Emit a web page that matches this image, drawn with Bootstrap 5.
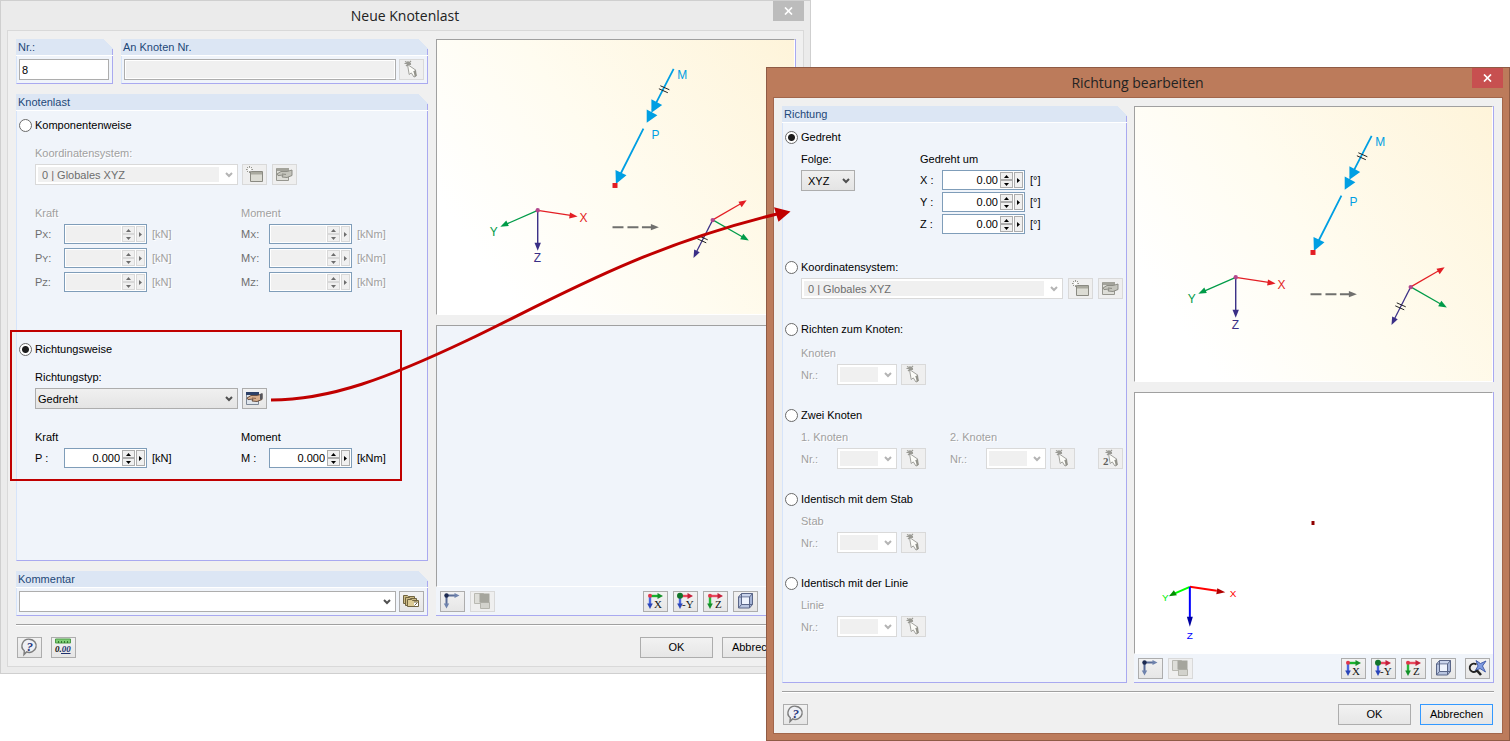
<!DOCTYPE html>
<html lang="de">
<head>
<meta charset="utf-8">
<meta name="viewport" content="width=device-width, initial-scale=1">
<title>Neue Knotenlast</title>
<link href="https://cdn.jsdelivr.net/npm/bootstrap@5.3.0/dist/css/bootstrap.min.css" rel="stylesheet">
<style>
:root{--face:#f0f0f0;--pane:#f0f4fa;--head:#dce6f4;--edge:#a9a9f0;--ctl:#adadad;--off:#d9d9d9;--mark:#c00000}
body{font-family:"Liberation Sans",Arial,sans-serif;font-size:11px;line-height:16px;color:#000;background:#fff}
/* the two dialogs overlap in the middle column */
.desk{display:grid;grid-template-columns:minmax(0,766fr) minmax(0,45fr) minmax(0,699fr);grid-template-rows:67px auto;align-items:start}
.dlg{--gap:8px;--cols:412fr 360fr;background:#ebebeb;border:1px solid #cfcfcf;padding:0 6px 6px;min-width:0}
.dlg-main{grid-column:1/3;grid-row:1/3}
.dlg-edit{--gap:7px;--cols:345fr 360fr;grid-column:2/4;grid-row:2/3;background:#bc7b5b;border-color:#8f5b45;z-index:1}
.bar{height:29px}
.bar h1{font:400 14px/30px "Open Sans","Noto Sans",sans-serif;color:#222;margin:0;padding-left:30px}
.shut{width:31px;height:20px;border:0;border-radius:0;padding:0;background:#bcbcbc;line-height:0}
.dlg-edit .shut{background:#c75050}
.client{background:var(--face);border:1px solid var(--off);padding:8px 7px 8px 8px}
.dlg-edit .client{border-color:#a2664b;padding:8px}
.split{display:grid;grid-template-columns:var(--cols);column-gap:var(--gap)}
.split>*{min-width:0}
.g10{gap:10px}
.g9{gap:9px;padding:0 1px}
.g8{gap:8px}
.g5{gap:5px}
.g4{gap:4px}
.g3{gap:3px}
.g2{gap:2px}
.pane-head{font-size:11px;line-height:16px;height:17px;margin:0;padding-left:2px;color:#1e4878;border-bottom:1px solid #fff;
 background:linear-gradient(var(--edge),var(--edge)) right bottom/1px 6px no-repeat,linear-gradient(225deg,transparent 7px,var(--head) 7px)}
.pane-body{background:var(--pane);border:solid var(--edge);border-width:0 1px 1px 0;border-left:1px solid #d6e4fa;padding:3px 3px 3px 2px}
.pane-form{padding-top:6px}
.nr{flex:0 0 97px}
.ind{margin-left:16px}
.box,.drop{height:21px;min-height:0;border:1px solid var(--ctl);border-radius:0;padding:0 2px;font-size:11px;line-height:16px;color:#000;background-color:#fff;box-shadow:none}
.box:disabled{background:var(--face);border-color:var(--ctl);box-shadow:inset 0 0 0 1px #fff}
.drop{--chev:url("data:image/svg+xml,%3Csvg xmlns='http://www.w3.org/2000/svg' width='8' height='6'%3E%3Cpath d='M1 1l3 3 3-3' fill='none' stroke='%23505050' stroke-width='2'/%3E%3C/svg%3E");
 appearance:none;background:var(--chev) right 4px center/8px 6px no-repeat,#fff}
.drop.raised{background:var(--chev) right 4px center/8px 6px no-repeat,linear-gradient(#f0f0f0,#e4e4e4)}
.drop:disabled{--chev:url("data:image/svg+xml,%3Csvg xmlns='http://www.w3.org/2000/svg' width='8' height='6'%3E%3Cpath d='M1 1l3 3 3-3' fill='none' stroke='%23b4b4b4' stroke-width='2'/%3E%3C/svg%3E");
 color:#6d6d6d;opacity:1;border-color:var(--off);padding-left:6px;
 background:var(--chev) right 4px center/8px 6px no-repeat,linear-gradient(var(--face),var(--face)) 2px 2px/calc(100% - 20px) calc(100% - 4px) no-repeat,#fff}
.w-type{flex:0 0 203px;width:203px}
.w-no{flex:0 0 60px;width:60px}
.w-seq{width:54px}
.w-seq.drop{padding-left:6px}
.tool{width:25px;height:21px;flex:none;padding:0;border:1px solid var(--ctl);border-radius:0;line-height:0;background:linear-gradient(#f2f2f2,#e6e6e6)}
.tool svg{width:23px;height:19px;display:block}
.tool:disabled{border-color:var(--off);background:#efefef;opacity:1}
.push{width:73px;height:21px;padding:0;border:1px solid var(--ctl);border-radius:0;font-size:11px;line-height:19px;background:linear-gradient(#f2f2f2,#e6e6e6);color:#000}
.push.preset{border-color:#3399ff}
.pick{display:flex;align-items:center;height:16px;gap:3px}
.pick input{appearance:none;width:13px;height:13px;margin:0;border:1px solid #6a6a6a;border-radius:50%;background:#fff;flex:none}
.pick input:checked{background:radial-gradient(circle,#1d1d1d 3px,#fff 4px)}
.dim{color:#a0a0a0;text-shadow:1px 1px #fff}
.half{color:#6d6d6d}
.half span{font-size:9px}
.unit{padding-left:5px}
.spin{display:flex;width:83px;height:20px;border:1px solid #7f9db9;background:#fff;padding:1px;gap:1px;flex:none}
.spin input{flex:1;min-width:0;border:0;padding:0 1px 0 0;text-align:right;background:#fff;color:#000;line-height:16px}
.spin input:disabled{background:var(--face)}
.spin div{display:flex;flex-direction:column;width:13px}
.spin button{border:1px solid var(--ctl);border-radius:0;background:#f0f0f0;padding:0;flex:1;display:flex;align-items:center;justify-content:center;min-height:0}
.spin>button{flex:0 0 9px}
.spin button:disabled{border-color:var(--off)}
.spin svg{fill:#000;display:block}
.spin button:disabled svg{fill:#6d6d6d}
.col-a{flex:0 0 206px}
.k1{width:29px}.k2{width:28px}.k3{width:22px}.k4{width:36px}
.col-seq{flex:0 0 119px}
.col-node{flex:0 0 149px}
.framed{border:2px solid var(--mark);margin:38px 22px 0 -9px;padding:9px 0 11px 7px}
.mt-label{margin-top:12px}
.mt-row{margin-top:6px}
.mt-ctl{margin-top:3px}
.mt-pair{margin-top:20px}
.sect{margin-top:22px}
.sect-top{margin-top:25px}
.sink{border:1px solid #fff;border-top-color:#a0a0a0;border-left-color:#a0a0a0}
.stack{border-right:1px solid var(--edge)}
.pic{background:linear-gradient(55deg,#fff 15%,#fffcf0 50%,#fef4da)}
.pic svg,.view svg{display:block;width:100%;height:274px}
.view{background:var(--pane)}
.view svg{height:260px}
.dlg-edit .view{background:#fff}
.strip{background:var(--pane);border:solid var(--edge);border-width:0 1px 1px 0;padding:4px 3px 3px 4px;gap:5px}
.rule{height:2px;background:#a0a0a0;border-bottom:1px solid #fff;margin:8px 0 11px}
.flow{position:absolute;left:0;top:0;width:100%;height:741px;pointer-events:none;z-index:2}
.defs{position:absolute;width:0;height:0}
</style>
<script src="https://cdn.jsdelivr.net/npm/bootstrap@5.3.0/dist/js/bootstrap.bundle.min.js"></script>
</head>
<body>
<svg class="defs" aria-hidden="true">
<defs>
<symbol id="i-up" viewBox="0 0 5 3"><path d="M0 3L2.500 0 5 3z"/></symbol>
<symbol id="i-dn" viewBox="0 0 5 3"><path d="M0 0L2.500 3 5 0z"/></symbol>
<symbol id="i-rt" viewBox="0 0 3 5"><path d="M0 0L3 2.500 0 5z"/></symbol>
<symbol id="i-pick" viewBox="0 0 23 19"><path d="M5 1.500l6 3M6 6l5-5M4.500 3.500h6.500M8 1v5" stroke="#9a9a94" stroke-width="1.200" fill="none"/><path d="M7.500 4.500l8.500 5.800-2.300 1.200 2.600 4-2.300 1.600-2.700-4.200-2.100 1.600z" fill="#fcfcf8" stroke="#8c8c86" stroke-width=".8"/><path d="M13.700 11.500l2.300-1.200.8 5.500-2 1.500z" fill="#92928a"/></symbol>
<symbol id="i-pick2" viewBox="0 0 23 19"><use href="#i-pick" x="2" width="23" height="19"/><text x="4" y="16" font-family="Liberation Serif,serif" font-weight="700" font-size="11" fill="#60605c">2</text></symbol>
<symbol id="i-new" viewBox="0 0 23 19"><path d="M7.500 6.500h12v10h-12z" fill="#dcdcd4" stroke="#8a8a82"/><path d="M8 7h11v2.500H8z" fill="#a9a99f"/><path d="M6.500 1v7M3 4.500h7M4 2l5 5M9 2L4 7" stroke="#96968f" fill="none"/><circle cx="6.500" cy="4.500" r="1.800" fill="#fff"/></symbol>
<symbol id="i-edit0" viewBox="0 0 23 19"><path d="M3.500 3.500h12v12h-12z" fill="#deded8" stroke="#96968f"/><path d="M4 3h12v3H4z" fill="#a3a39b"/><path d="M4 9l4-2.500h6l5-1.500v5.500l-5 2-5-.5 1-2-5 .6z" fill="#c4c4bc" stroke="#85857d" stroke-width=".9"/><path d="M9 9l4 .4" stroke="#8a8a82"/></symbol>
<symbol id="i-edit" viewBox="0 0 23 19"><path d="M3.500 3.500h12v12h-12z" fill="#dfe5ec" stroke="#7c8796"/><path d="M3 3h13v3H3z" fill="#2e4167"/><path d="M4 9l4-2.500h6l5-1.500v5.500l-5 2-5-.5 1-2-5 .6z" fill="#d8ae8c" stroke="#5c4334" stroke-width=".9"/><path d="M9 9l4 .4" stroke="#8a6248"/><path d="M17 5l2.500-1v5.500l-2.500 1.500z" fill="#55555b"/></symbol>
<symbol id="i-stack" viewBox="0 0 23 19"><g fill="#cdbb84" stroke="#6f6340"><path d="M3.500 3.500h4l1 1h6v7h-11z"/><path d="M5.500 5.500h4l1 1h6v7h-11z"/><path d="M7.500 7.500h4l1 1h6v6h-11z" fill="#dccb95"/></g><path d="M14 10h4v4h-4z" fill="#fff"/><path d="M14.500 13.500l3-3M14 10h3.500" stroke="#6f6340"/></symbol>
<symbol id="i-help" viewBox="0 0 23 19"><path d="M11.500 1.200a7 6.600 0 1 1-3 12.700L6 16.500l.3-3.800A7 6.600 0 0 1 11.500 1.200z" fill="#eef0f5" stroke="#7d7d7d" stroke-width="1.400"/><text x="8.500" y="12.500" font-family="Liberation Serif,serif" font-size="13" font-weight="700" font-style="italic" fill="#26367c">?</text></symbol>
<symbol id="i-unit" viewBox="0 0 23 19"><path d="M3.500 1h15v4h-15z" fill="#7fce75" stroke="#4e9c48"/><path d="M6.500 5V3M9.500 5V3M12.500 5V3M15.500 5V3" stroke="#32762f"/><text x="3" y="14" font-family="Liberation Serif,serif" font-size="9" font-weight="700" font-style="italic" fill="#111">0.<tspan fill="#20306e">00</tspan></text><path d="M9 15.500h9.500" stroke="#20306e"/></symbol>
<symbol id="i-axes" viewBox="0 0 23 19"><path d="M5.500 3.500V13M5.500 3.500H15" stroke="#5a6d98" stroke-width="2" fill="none"/><path d="M2.800 11.500L5.500 16.500 8.200 11.500zM13.500 1l5 2.500-5 2.500z" fill="#6f83ad"/><circle cx="5.500" cy="3.500" r="2.200" fill="#1c2a50"/></symbol>
<symbol id="i-layers" viewBox="0 0 23 19"><path d="M3.500 1.500h9v10h-9z" fill="#deded9" stroke="#b9b9b2"/><path d="M9.500 10.500h9v6h-9z" fill="#d2d2cc" stroke="#b4b4ac"/><path d="M8.500 1.500h10v9h-10z" fill="#a5a59d"/></symbol>
<symbol id="i-vx" viewBox="0 0 23 19"><path d="M6 4h9" stroke="#19b22d" stroke-width="2.400"/><path d="M13.500 1l5.500 3-5.500 3z" fill="#15902a"/><path d="M6 4v9" stroke="#4a66e0" stroke-width="2.400"/><path d="M3.200 11.500L6 17l2.800-5.500z" fill="#2a45b8"/><circle cx="6" cy="3.800" r="2" fill="#e2354a"/><text x="10" y="16" font-family="Liberation Serif,serif" font-size="11" fill="#111">X</text></symbol>
<symbol id="i-vy" viewBox="0 0 23 19"><path d="M6 4h9" stroke="#e8495e" stroke-width="2.400"/><path d="M13.500 1l5.500 3-5.500 3z" fill="#c4203a"/><path d="M6 4v9" stroke="#4a66e0" stroke-width="2.400"/><path d="M3.200 11.500L6 17l2.800-5.500z" fill="#2a45b8"/><circle cx="6" cy="3.800" r="3" fill="#11752a"/><text x="8" y="16" font-family="Liberation Serif,serif" font-size="11" fill="#111">-Y</text></symbol>
<symbol id="i-vz" viewBox="0 0 23 19"><path d="M6 4h9" stroke="#e8495e" stroke-width="2.400"/><path d="M13.500 1l5.500 3-5.500 3z" fill="#c4203a"/><path d="M6 4v9" stroke="#26b83a" stroke-width="2.400"/><path d="M3.200 11.500L6 17l2.800-5.500z" fill="#13902a"/><circle cx="6" cy="3.800" r="2" fill="#e2354a"/><text x="11" y="16" font-family="Liberation Serif,serif" font-size="11" fill="#111">Z</text></symbol>
<symbol id="i-cube" viewBox="0 0 23 19"><path d="M7.500 1.500h11l-3 3.500h-11z" fill="#c9d4ec"/><path d="M18.500 1.500v11l-3 3.500V5z" fill="#a4b3d6"/><path d="M4.500 5h11v11h-11z" fill="#b9c5e0"/><path d="M4.500 5l3-3.500h11v11l-3 3.500h-11zM4.500 5h11v11M15.500 5l3-3.500M7.500 1.500v11h11M7.500 12.500L4.500 16" fill="none" stroke="#5a6688"/><path d="M8 5.500h7V12H8z" fill="#eef3fd"/></symbol>
<symbol id="i-zoom" viewBox="0 0 23 19"><path d="M10 1.500l4.500 3L20 2l-3.500 5 3 6-5.500-3.500-5 2.500 3-5z" fill="#7f9be0" stroke="#3a55a4" stroke-width=".9"/><path d="M10.500 5.500A4.200 4.200 0 1 0 11.500 11" fill="none" stroke="#222" stroke-width="1.800"/><path d="M11 11.500l4 4.500" stroke="#222" stroke-width="2.600"/></symbol>
<symbol id="i-x" viewBox="0 0 9 8"><path d="M1 .5l7 7M8 .5l-7 7" stroke="#fff" stroke-width="1.700"/></symbol>
<symbol id="scheme" viewBox="0 0 358 274">
 <g font-family="Liberation Sans,Arial,sans-serif" font-size="12">
 <path d="M237.300 28.500L216 70M207 88.500L184 134" stroke="#009fe3" stroke-width="1.800"/>
 <path d="M215 59l10.800 5.800L215 72.500zM210.300 69.300L221 75l-10.700 7.600zM179 130l11 5.200-10.600 8.800z" fill="#009fe3"/>
 <path d="M224 45.500l9 4M222.500 48.500l9 4" stroke="#222"/>
 <path d="M176 143h5v5h-5z" fill="#e31e24"/>
 <text x="241" y="39" fill="#009fe3">M</text><text x="215" y="99" fill="#009fe3">P</text>
 <path d="M101 170.500l33 5" stroke="#e31e24" stroke-width="1.200"/><path d="M141 176.700l-8.500 2 .9-6.200z" fill="#e31e24"/>
 <path d="M101 170.500L70 184" stroke="#009b48" stroke-width="1.200"/><path d="M63.500 186.800l6-6.300 2.500 5.600z" fill="#009b48"/>
 <path d="M101 170.500V204" stroke="#3a2f86" stroke-width="1.400"/><path d="M101 211l-3.200-8h6.400z" fill="#3a2f86"/>
 <circle cx="101" cy="170.300" r="2.200" fill="#b2478d"/>
 <text x="143" y="182" fill="#e31e24">X</text><text x="53" y="196" fill="#009b48">Y</text><text x="97" y="222" fill="#3a2f86">Z</text>
 <path d="M176 187.300h11M191 187.300h11M205.500 187.300h10" stroke="#70706e" stroke-width="2"/><path d="M222.500 187.300l-8-3.200v6.400z" fill="#70706e"/>
 <path d="M276.500 180l28-16.200" stroke="#e31e24" stroke-width="1.200"/><path d="M310.500 160.300l-5 7-3.200-5.500z" fill="#e31e24"/>
 <path d="M276.500 180l30 17.200" stroke="#009b48" stroke-width="1.200"/><path d="M312.700 200.800l-8.700-1.300 3.200-5.600z" fill="#009b48"/>
 <path d="M276.500 180L260 212.500" stroke="#3a2f86" stroke-width="1.200"/><path d="M257.200 218.300l.7-8.700 5.600 2.900z" fill="#3a2f86"/>
 <path d="M262.500 196l9 4M261 199l9 4" stroke="#222"/>
 <circle cx="276.500" cy="180.200" r="2.200" fill="#b2478d"/>
 </g>
</symbol>
</defs>
</svg>

<main class="desk position-relative">
<section class="dlg dlg-main" aria-label="Neue Knotenlast">
 <div class="bar d-flex align-items-start">
  <h1 class="flex-grow-1 text-center">Neue Knotenlast</h1>
  <button type="button" class="btn shut" aria-label="Schließen"><svg width="9" height="8"><use href="#i-x"/></svg></button>
 </div>
 <form class="client">
  <div class="split">
   <div class="d-flex flex-column g10">
    <div class="d-flex g8">
     <section class="nr">
      <h2 class="pane-head"><label for="nr">Nr.:</label></h2>
      <div class="pane-body"><input id="nr" class="form-control box" value="8"></div>
     </section>
     <section class="flex-grow-1">
      <h2 class="pane-head"><label for="anr">An Knoten Nr.</label></h2>
      <div class="pane-body d-flex g3"><input id="anr" class="form-control box" disabled><button type="button" class="btn tool" disabled aria-label="Knoten wählen"><svg><use href="#i-pick"/></svg></button></div>
     </section>
    </div>
    <section class="flex-grow-1 d-flex flex-column">
     <h2 class="pane-head">Knotenlast</h2>
     <div class="pane-body pane-form flex-grow-1">
      <label class="pick"><input type="radio" name="mode">Komponentenweise</label>
      <div class="ind">
       <label for="ks1" class="dim d-block mt-label">Koordinatensystem:</label>
       <div class="d-flex g4 mt-ctl"><select id="ks1" class="form-select drop w-type" disabled><option>0 | Globales XYZ</option></select>
        <div class="d-flex g5"><button type="button" class="btn tool" disabled aria-label="Neu"><svg><use href="#i-new"/></svg></button><button type="button" class="btn tool" disabled aria-label="Bearbeiten"><svg><use href="#i-edit0"/></svg></button></div></div>
       <div class="d-flex mt-pair">
        <div class="col-a">
         <div class="dim">Kraft</div>
         <div class="d-flex flex-column g4 mt-ctl">
         <div class="d-flex align-items-center"><label for="px" class="k1 half">P<span>X</span>:</label><div class="spin"><input id="px" disabled><div><button type="button" disabled aria-label="mehr"><svg width="5" height="3"><use href="#i-up"/></svg></button><button type="button" disabled aria-label="weniger"><svg width="5" height="3"><use href="#i-dn"/></svg></button></div><button type="button" disabled aria-label="Liste"><svg width="3" height="5"><use href="#i-rt"/></svg></button></div><span class="dim unit">[kN]</span></div>
         <div class="d-flex align-items-center"><label for="py" class="k1 half">P<span>Y</span>:</label><div class="spin"><input id="py" disabled><div><button type="button" disabled aria-label="mehr"><svg width="5" height="3"><use href="#i-up"/></svg></button><button type="button" disabled aria-label="weniger"><svg width="5" height="3"><use href="#i-dn"/></svg></button></div><button type="button" disabled aria-label="Liste"><svg width="3" height="5"><use href="#i-rt"/></svg></button></div><span class="dim unit">[kN]</span></div>
         <div class="d-flex align-items-center"><label for="pz" class="k1 half">P<span>Z</span>:</label><div class="spin"><input id="pz" disabled><div><button type="button" disabled aria-label="mehr"><svg width="5" height="3"><use href="#i-up"/></svg></button><button type="button" disabled aria-label="weniger"><svg width="5" height="3"><use href="#i-dn"/></svg></button></div><button type="button" disabled aria-label="Liste"><svg width="3" height="5"><use href="#i-rt"/></svg></button></div><span class="dim unit">[kN]</span></div>
         </div>
        </div>
        <div>
         <div class="dim">Moment</div>
         <div class="d-flex flex-column g4 mt-ctl">
         <div class="d-flex align-items-center"><label for="mx" class="k2 half">M<span>X</span>:</label><div class="spin"><input id="mx" disabled><div><button type="button" disabled aria-label="mehr"><svg width="5" height="3"><use href="#i-up"/></svg></button><button type="button" disabled aria-label="weniger"><svg width="5" height="3"><use href="#i-dn"/></svg></button></div><button type="button" disabled aria-label="Liste"><svg width="3" height="5"><use href="#i-rt"/></svg></button></div><span class="dim unit">[kNm]</span></div>
         <div class="d-flex align-items-center"><label for="my" class="k2 half">M<span>Y</span>:</label><div class="spin"><input id="my" disabled><div><button type="button" disabled aria-label="mehr"><svg width="5" height="3"><use href="#i-up"/></svg></button><button type="button" disabled aria-label="weniger"><svg width="5" height="3"><use href="#i-dn"/></svg></button></div><button type="button" disabled aria-label="Liste"><svg width="3" height="5"><use href="#i-rt"/></svg></button></div><span class="dim unit">[kNm]</span></div>
         <div class="d-flex align-items-center"><label for="mz" class="k2 half">M<span>Z</span>:</label><div class="spin"><input id="mz" disabled><div><button type="button" disabled aria-label="mehr"><svg width="5" height="3"><use href="#i-up"/></svg></button><button type="button" disabled aria-label="weniger"><svg width="5" height="3"><use href="#i-dn"/></svg></button></div><button type="button" disabled aria-label="Liste"><svg width="3" height="5"><use href="#i-rt"/></svg></button></div><span class="dim unit">[kNm]</span></div>
         </div>
        </div>
       </div>
      </div>
      <div class="framed">
       <label class="pick"><input type="radio" name="mode" checked>Richtungsweise</label>
       <div class="ind">
        <label for="rt" class="d-block mt-label">Richtungstyp:</label>
        <div class="d-flex g4 mt-ctl"><select id="rt" class="form-select drop raised w-type"><option>Gedreht</option></select><button type="button" class="btn tool" aria-label="Richtung bearbeiten"><svg><use href="#i-edit"/></svg></button></div>
        <div class="d-flex mt-pair">
         <div class="col-a">
          <div>Kraft</div>
          <div class="d-flex align-items-center mt-ctl"><label for="p" class="k1">P :</label><div class="spin"><input id="p" value="0.000"><div><button type="button" aria-label="mehr"><svg width="5" height="3"><use href="#i-up"/></svg></button><button type="button" aria-label="weniger"><svg width="5" height="3"><use href="#i-dn"/></svg></button></div><button type="button" aria-label="Liste"><svg width="3" height="5"><use href="#i-rt"/></svg></button></div><span class="unit">[kN]</span></div>
         </div>
         <div>
          <div>Moment</div>
          <div class="d-flex align-items-center mt-ctl"><label for="m" class="k2">M :</label><div class="spin"><input id="m" value="0.000"><div><button type="button" aria-label="mehr"><svg width="5" height="3"><use href="#i-up"/></svg></button><button type="button" aria-label="weniger"><svg width="5" height="3"><use href="#i-dn"/></svg></button></div><button type="button" aria-label="Liste"><svg width="3" height="5"><use href="#i-rt"/></svg></button></div><span class="unit">[kNm]</span></div>
         </div>
        </div>
       </div>
      </div>
     </div>
    </section>
    <section>
     <h2 class="pane-head"><label for="kom">Kommentar</label></h2>
     <div class="pane-body d-flex g3"><select id="kom" class="form-select drop"><option></option></select><button type="button" class="btn tool" aria-label="Kommentare"><svg><use href="#i-stack"/></svg></button></div>
    </section>
   </div>
   <div class="d-flex flex-column g10">
    <div class="stack"><div class="sink pic"><svg role="img" aria-label="Lastschema"><use href="#scheme"/></svg></div></div>
    <div>
     <div class="stack"><div class="sink view"><svg aria-hidden="true"></svg></div></div>
     <div class="strip d-flex">
      <button type="button" class="btn tool" aria-label="Achsen"><svg><use href="#i-axes"/></svg></button><button type="button" class="btn tool" disabled aria-label="Ebenen"><svg><use href="#i-layers"/></svg></button>
      <button type="button" class="btn tool ms-auto" aria-label="Ansicht X"><svg><use href="#i-vx"/></svg></button><button type="button" class="btn tool" aria-label="Ansicht -Y"><svg><use href="#i-vy"/></svg></button><button type="button" class="btn tool" aria-label="Ansicht Z"><svg><use href="#i-vz"/></svg></button><button type="button" class="btn tool" aria-label="Isometrie"><svg><use href="#i-cube"/></svg></button><button type="button" class="btn tool ms-1" aria-label="Zoom"><svg><use href="#i-zoom"/></svg></button>
     </div>
    </div>
   </div>
  </div>
  <div class="rule"></div>
  <div class="d-flex g9">
   <button type="button" class="btn tool" aria-label="Hilfe"><svg><use href="#i-help"/></svg></button><button type="button" class="btn tool" aria-label="Einheiten"><svg><use href="#i-unit"/></svg></button>
   <button type="button" class="btn push ms-auto">OK</button><button type="button" class="btn push">Abbrechen</button>
  </div>
 </form>
</section>

<section class="dlg dlg-edit" aria-label="Richtung bearbeiten">
 <div class="bar d-flex align-items-start">
  <h1 class="flex-grow-1 text-center">Richtung bearbeiten</h1>
  <button type="button" class="btn shut" aria-label="Schließen"><svg width="9" height="8"><use href="#i-x"/></svg></button>
 </div>
 <form class="client">
  <div class="split">
   <section class="d-flex flex-column">
    <h2 class="pane-head">Richtung</h2>
    <div class="pane-body pane-form flex-grow-1">
     <label class="pick"><input type="radio" name="dir" checked>Gedreht</label>
     <div class="ind d-flex mt-row">
      <div class="col-seq"><label for="seq" class="d-block">Folge:</label><select id="seq" class="form-select drop raised w-seq mt-ctl"><option>XYZ</option></select></div>
      <div>
       <div>Gedreht um</div>
       <div class="d-flex flex-column g2 mt-ctl">
        <div class="d-flex align-items-center"><label for="rx" class="k3">X :</label><div class="spin"><input id="rx" value="0.00"><div><button type="button" aria-label="mehr"><svg width="5" height="3"><use href="#i-up"/></svg></button><button type="button" aria-label="weniger"><svg width="5" height="3"><use href="#i-dn"/></svg></button></div><button type="button" aria-label="Liste"><svg width="3" height="5"><use href="#i-rt"/></svg></button></div><span class="unit">[°]</span></div>
        <div class="d-flex align-items-center"><label for="ry" class="k3">Y :</label><div class="spin"><input id="ry" value="0.00"><div><button type="button" aria-label="mehr"><svg width="5" height="3"><use href="#i-up"/></svg></button><button type="button" aria-label="weniger"><svg width="5" height="3"><use href="#i-dn"/></svg></button></div><button type="button" aria-label="Liste"><svg width="3" height="5"><use href="#i-rt"/></svg></button></div><span class="unit">[°]</span></div>
        <div class="d-flex align-items-center"><label for="rz" class="k3">Z :</label><div class="spin"><input id="rz" value="0.00"><div><button type="button" aria-label="mehr"><svg width="5" height="3"><use href="#i-up"/></svg></button><button type="button" aria-label="weniger"><svg width="5" height="3"><use href="#i-dn"/></svg></button></div><button type="button" aria-label="Liste"><svg width="3" height="5"><use href="#i-rt"/></svg></button></div><span class="unit">[°]</span></div>
       </div>
      </div>
     </div>
     <div class="sect-top">
      <label class="pick"><input type="radio" name="dir">Koordinatensystem:</label>
      <div class="ind d-flex g5 mt-ctl"><select class="form-select drop" disabled aria-label="Koordinatensystem"><option>0 | Globales XYZ</option></select><button type="button" class="btn tool" disabled aria-label="Neu"><svg><use href="#i-new"/></svg></button><button type="button" class="btn tool" disabled aria-label="Bearbeiten"><svg><use href="#i-edit0"/></svg></button></div>
     </div>
     <div class="sect">
      <label class="pick"><input type="radio" name="dir">Richten zum Knoten:</label>
      <div class="ind dim mt-2">Knoten</div>
      <div class="ind d-flex align-items-center mt-ctl"><label for="n0" class="k4 dim">Nr.:</label><select id="n0" class="form-select drop w-no" disabled><option></option></select><button type="button" class="btn tool ms-1" disabled aria-label="Knoten wählen"><svg><use href="#i-pick"/></svg></button></div>
     </div>
     <div class="sect">
      <label class="pick"><input type="radio" name="dir">Zwei Knoten</label>
      <div class="ind dim d-flex mt-row"><span class="col-node">1. Knoten</span><span>2. Knoten</span></div>
      <div class="ind d-flex mt-ctl">
       <div class="col-node d-flex align-items-center"><label for="n1" class="k4 dim">Nr.:</label><select id="n1" class="form-select drop w-no" disabled><option></option></select><button type="button" class="btn tool ms-1" disabled aria-label="Knoten wählen"><svg><use href="#i-pick"/></svg></button></div>
       <div class="d-flex align-items-center"><label for="n2" class="k4 dim">Nr.:</label><select id="n2" class="form-select drop w-no" disabled><option></option></select><button type="button" class="btn tool ms-1" disabled aria-label="Knoten wählen"><svg><use href="#i-pick"/></svg></button></div>
       <button type="button" class="btn tool ms-auto" disabled aria-label="Zwei Knoten wählen"><svg><use href="#i-pick2"/></svg></button>
      </div>
     </div>
     <div class="sect">
      <label class="pick"><input type="radio" name="dir">Identisch mit dem Stab</label>
      <div class="ind dim mt-row">Stab</div>
      <div class="ind d-flex align-items-center mt-ctl"><label for="st" class="k4 dim">Nr.:</label><select id="st" class="form-select drop w-no" disabled><option></option></select><button type="button" class="btn tool ms-1" disabled aria-label="Stab wählen"><svg><use href="#i-pick"/></svg></button></div>
     </div>
     <div class="sect">
      <label class="pick"><input type="radio" name="dir">Identisch mit der Linie</label>
      <div class="ind dim mt-row">Linie</div>
      <div class="ind d-flex align-items-center mt-ctl"><label for="li" class="k4 dim">Nr.:</label><select id="li" class="form-select drop w-no" disabled><option></option></select><button type="button" class="btn tool ms-1" disabled aria-label="Linie wählen"><svg><use href="#i-pick"/></svg></button></div>
     </div>
    </div>
   </section>
   <div class="d-flex flex-column g10">
    <div class="stack"><div class="sink pic"><svg role="img" aria-label="Lastschema"><use href="#scheme"/></svg></div></div>
    <div>
     <div class="stack"><div class="sink view"><svg viewBox="0 0 358 260" role="img" aria-label="Vorschau" font-family="Liberation Sans,Arial,sans-serif" font-size="10">
      <path d="M55 194l27 4" stroke="#f00" stroke-width="2"/><path d="M90.500 199.500l-9 2 1-6z" fill="#b00000"/>
      <path d="M55 194l-15 6.500" stroke="#0f0" stroke-width="2"/><path d="M34 203.500l5-6 3 5z" fill="#009000"/>
      <path d="M55 194v31" stroke="#00f" stroke-width="2"/><path d="M55 234l-3-10h6z" fill="#0000a0"/>
      <text x="95" y="204" fill="#f00">X</text><text x="27" y="208" fill="#0e0">Y</text><text x="52" y="246" fill="#00f">Z</text>
      <path d="M177 128h3v4h-3z" fill="#900000"/>
     </svg></div></div>
     <div class="strip d-flex">
      <button type="button" class="btn tool" aria-label="Achsen"><svg><use href="#i-axes"/></svg></button><button type="button" class="btn tool" disabled aria-label="Ebenen"><svg><use href="#i-layers"/></svg></button>
      <button type="button" class="btn tool ms-auto" aria-label="Ansicht X"><svg><use href="#i-vx"/></svg></button><button type="button" class="btn tool" aria-label="Ansicht -Y"><svg><use href="#i-vy"/></svg></button><button type="button" class="btn tool" aria-label="Ansicht Z"><svg><use href="#i-vz"/></svg></button><button type="button" class="btn tool" aria-label="Isometrie"><svg><use href="#i-cube"/></svg></button><button type="button" class="btn tool ms-1" aria-label="Zoom"><svg><use href="#i-zoom"/></svg></button>
     </div>
    </div>
   </div>
  </div>
  <div class="rule"></div>
  <div class="d-flex g9">
   <button type="button" class="btn tool" aria-label="Hilfe"><svg><use href="#i-help"/></svg></button>
   <button type="button" class="btn push ms-auto">OK</button><button type="button" class="btn push preset">Abbrechen</button>
  </div>
 </form>
</section>

<svg class="flow" viewBox="0 0 1510 741" preserveAspectRatio="none" aria-hidden="true"><path d="M271 400C330 400 388 378 468 340S640 247 777 214" fill="none" stroke="#c00000" stroke-width="3"/><path d="M790.500 211.500L774 207.300 778.500 221.800z" fill="#c00000"/></svg>
</main>
</body>
</html>
